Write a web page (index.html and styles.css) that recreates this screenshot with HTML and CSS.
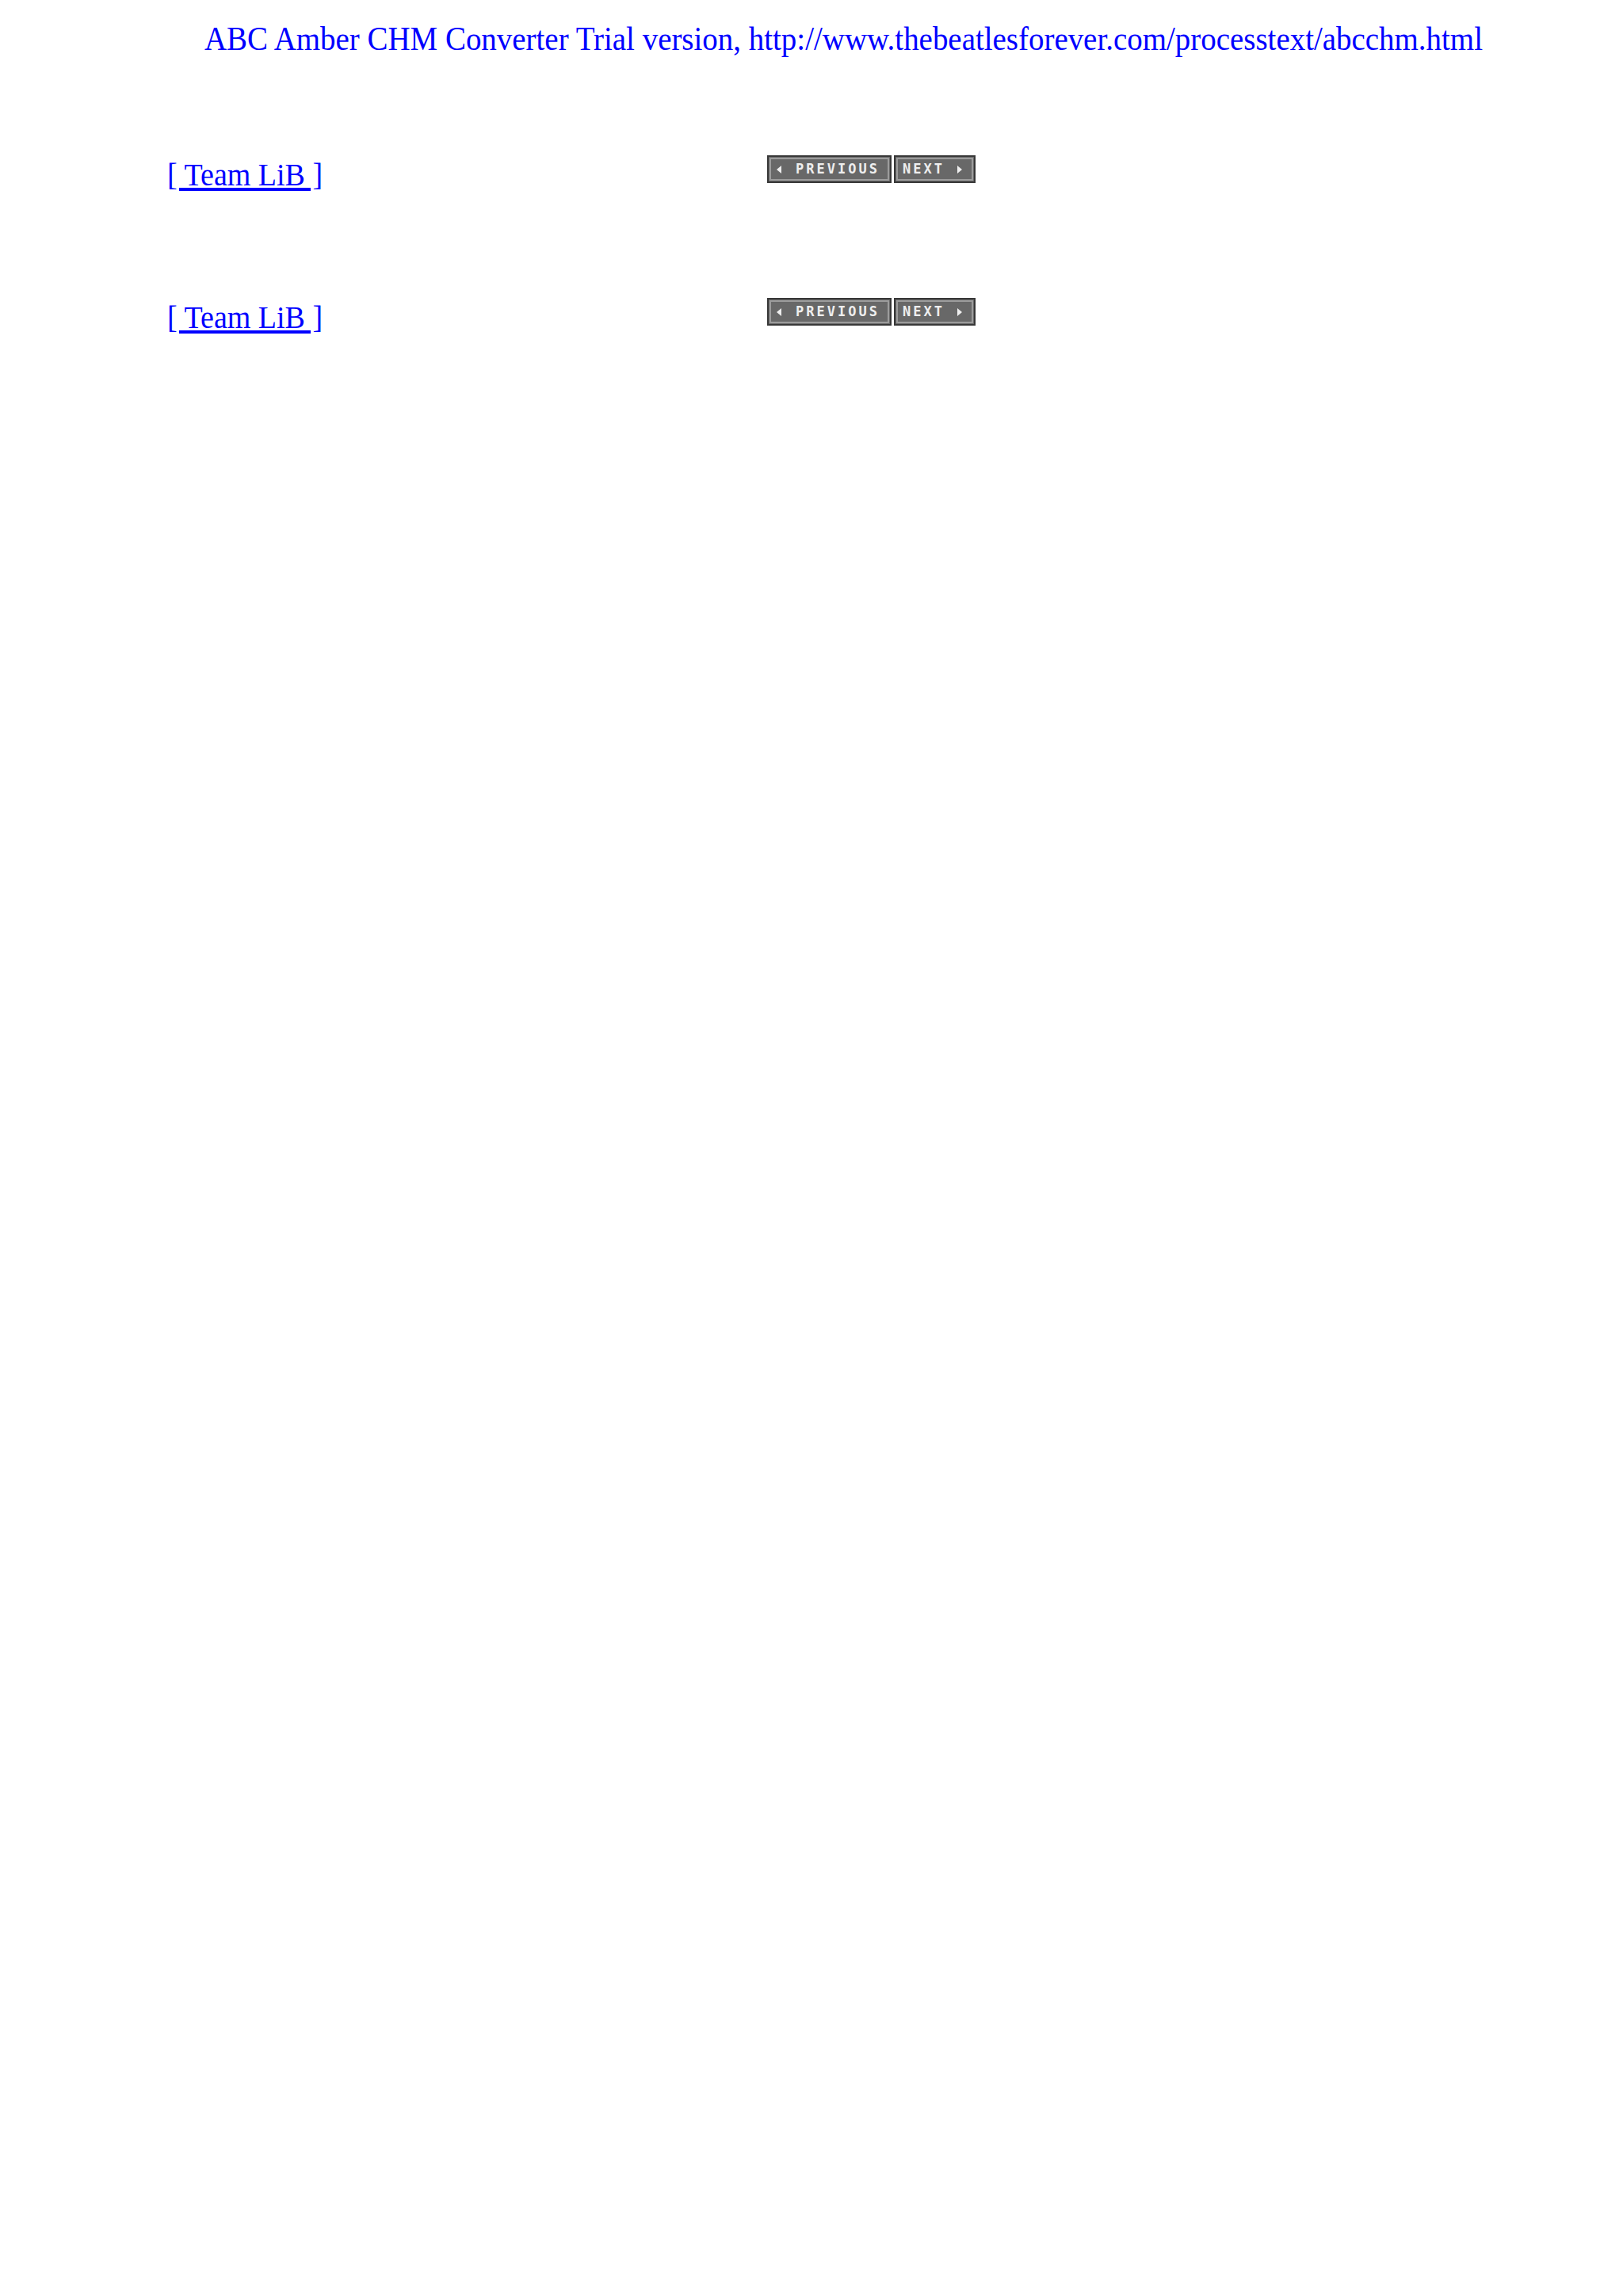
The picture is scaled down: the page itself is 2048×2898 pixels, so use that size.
FILE: index.html
```html
<!DOCTYPE html>
<html lang="en">
<head>
    <meta charset="UTF-8">
    <title>[ Team LiB ]</title>
    <link rel="stylesheet" href="styles.css">
</head>
<body>
    <div class="trial"><span class="narrow">ABC Amber CHM Converter Trial version, http://www.thebeatlesforever.com/processtext/abcchm.html</span></div>

    <div class="nav nav-top">
        <div class="nav-left"><a href="#" class="teamlib narrow">[ Team LiB ]</a></div>
        <div class="nav-buttons">
            <a href="#" class="btn btn-prev">
                <svg class="arrow" width="6" height="10" viewBox="0 0 6 10"><path d="M6 0V10L0 5Z"/></svg>
                <span class="label">PREVIOUS</span>
            </a>
            <a href="#" class="btn btn-next">
                <span class="label">NEXT</span>
                <svg class="arrow" width="6" height="10" viewBox="0 0 6 10"><path d="M0 0V10L6 5Z"/></svg>
            </a>
        </div>
    </div>

    <div class="nav nav-bottom">
        <div class="nav-left"><a href="#" class="teamlib narrow">[ Team LiB ]</a></div>
        <div class="nav-buttons">
            <a href="#" class="btn btn-prev">
                <svg class="arrow" width="6" height="10" viewBox="0 0 6 10"><path d="M6 0V10L0 5Z"/></svg>
                <span class="label">PREVIOUS</span>
            </a>
            <a href="#" class="btn btn-next">
                <span class="label">NEXT</span>
                <svg class="arrow" width="6" height="10" viewBox="0 0 6 10"><path d="M0 0V10L6 5Z"/></svg>
            </a>
        </div>
    </div>
</body>
</html>
```

FILE: styles.css
```css
body {
    margin: 0;
    background-color: #ffffff;
    font-family: "Liberation Serif", "Times New Roman", serif;
}
/* the serif text here is set a bit condensed */
.narrow {
    display: inline-block;
    transform: scaleX(0.927);
    transform-origin: left center;
}
.trial {
    padding: 24px 0 0 258px;
    font-size: 42px;
    line-height: 50px;
    color: #0000ff;
    white-space: nowrap;
}
.nav {
    display: flex;
    align-items: flex-end;
    padding-left: 211px;
}
.nav-top {
    margin-top: 122px;
}
.nav-bottom {
    margin-top: 135px;
}
.nav-left {
    width: 757px;
    font-size: 41px;
    line-height: 41px;
}
.teamlib {
    color: #0000ff;
    white-space: nowrap;
}
.nav-buttons {
    display: flex;
    gap: 3px;
    margin-bottom: 10px;
}
.btn {
    display: flex;
    align-items: center;
    height: 35px;
    box-sizing: border-box;
    border: 2px solid #383838;
    box-shadow: inset 0 0 0 1px #6a6a6a, inset 0 0 0 3px #9c9c9c;
    background-color: #686868;
    color: #eeeeee;
    text-decoration: none;
}
.btn-prev {
    width: 157px;
    padding-left: 10px;
    gap: 18px;
}
.btn-next {
    width: 103px;
    padding-left: 9px;
    gap: 16px;
}
.label {
    font-family: "DejaVu Sans Mono", monospace;
    font-weight: bold;
    font-size: 17px;
    letter-spacing: 3px;
    line-height: 1;
}
.arrow {
    fill: #eeeeee;
}
```
